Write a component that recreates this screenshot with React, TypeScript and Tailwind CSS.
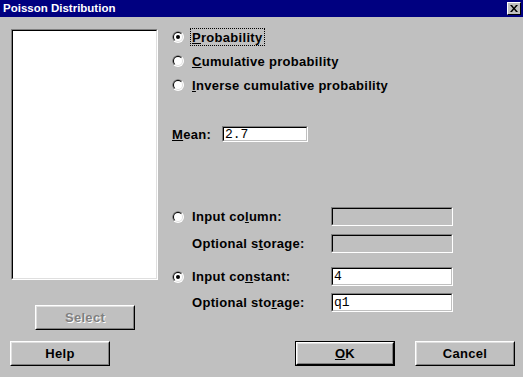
import { useId } from 'react';

const font = "font-['Liberation_Sans',Arial,sans-serif]";

// Win95-style radio button, drawn as two bevelled rings
const Radio: React.FC<{ checked?: boolean }> = ({ checked }) => {
  const id = useId();
  return (
    <svg width="12" height="12" viewBox="0 0 12 12" className="shrink-0">
      <defs>
        <clipPath id={id}>
          <polygon points="0,0 12,0 0,12" />
        </clipPath>
      </defs>
      <circle cx="6" cy="6" r="6" fill="#ffffff" />
      <circle cx="6" cy="6" r="6" fill="#808080" clipPath={`url(#${id})`} />
      <circle cx="6" cy="6" r="5" fill="#dfdfdf" />
      <circle cx="6" cy="6" r="5" fill="#000000" clipPath={`url(#${id})`} />
      <circle cx="6" cy="6" r="4" fill="#ffffff" />
      {checked && <circle cx="6" cy="6" r="2" fill="#000000" />}
    </svg>
  );
};

// Sunken edit field
const Field: React.FC<{ value?: string; disabled?: boolean; className?: string }> = ({
  value,
  disabled,
  className = '',
}) => (
  <div
    className={`border border-t-[#808080] border-l-[#808080] border-b-white border-r-white ${className}`}
  >
    <div
      className={`h-full border border-t-black border-l-black border-b-[#c0c0c0] border-r-[#c0c0c0] px-[1px] flex items-center font-['Liberation_Mono','Courier_New',monospace] font-normal tracking-normal text-[13px] leading-none text-black ${
        disabled ? 'bg-[#c0c0c0]' : 'bg-white'
      }`}
    >
      {value}
    </div>
  </div>
);

// Raised push button
const Button: React.FC<{
  children: React.ReactNode;
  isDefault?: boolean;
  disabled?: boolean;
  className?: string;
}> = ({ children, isDefault, disabled, className = '' }) => {
  const inner = (
    <div className="h-full border border-t-white border-l-white border-b-black border-r-black">
      <div className="h-full border border-t-[#dfdfdf] border-l-[#dfdfdf] border-b-[#808080] border-r-[#808080] flex items-center justify-center">
        <span
          className={`text-[13px] font-bold leading-none tracking-[0.3px] ${
            disabled ? 'text-[#808080] [text-shadow:1px_1px_0_#ffffff]' : 'text-black'
          }`}
        >
          {children}
        </span>
      </div>
    </div>
  );
  return (
    <div className={`h-[25px] w-[100px] ${isDefault ? 'border border-black' : ''} ${className}`}>
      {inner}
    </div>
  );
};

export default function App() {
  return (
    <div className={`w-[523px] h-[377px] bg-[#c0c0c0] ${font} text-black select-none overflow-hidden`}>
      {/* Title bar */}
      <div className="h-[17px] bg-[#000080] flex items-center justify-between pl-[3px] pr-[2px]">
        <span className="text-white font-bold text-[11.5px] leading-none">Poisson Distribution</span>
        <div className="w-[14px] h-[13px] bg-[#c0c0c0] border border-t-white border-l-white border-b-black border-r-black flex items-center justify-center">
          <svg width="8" height="7" viewBox="0 0 8 7">
            <path d="M0 0h2l2 2.5L6 0h2L5 3.5 8 7H6L4 4.5 2 7H0l3-3.5z" fill="#000" />
          </svg>
        </div>
      </div>

      {/* Main area */}
      <div className="flex pt-[12px]">
        {/* Left column: variable list + Select */}
        <div className="ml-[11px] w-[147px] flex flex-col">
          <div className="h-[251px] border border-t-[#808080] border-l-[#808080] border-b-white border-r-white">
            <div className="h-full bg-white border border-t-black border-l-black border-b-[#dfdfdf] border-r-[#dfdfdf]" />
          </div>
          <Button disabled className="mt-[25px] ml-[24px]">
            Select
          </Button>
        </div>

        {/* Right column */}
        <div className="ml-[14px] flex flex-col text-[13px] font-bold leading-none tracking-[0.3px]">
          <div className="flex flex-col gap-[6px] -mt-[1px]">
            <div className="flex items-center h-[18px]">
              <Radio checked />
              <span className="ml-[6px] h-[18px] px-[1px] flex items-center border border-dotted border-black">
                <span className="underline">P</span>robability
              </span>
            </div>
            <div className="flex items-center h-[18px]">
              <Radio />
              <span className="ml-[8px]">
                <span className="underline">C</span>umulative probability
              </span>
            </div>
            <div className="flex items-center h-[18px]">
              <Radio />
              <span className="ml-[8px]">
                <span className="underline">I</span>nverse cumulative probability
              </span>
            </div>
          </div>

          <div className="flex items-center mt-[32px]">
            <span className="w-[50px]">
              <span className="underline">M</span>ean:
            </span>
            <Field value="2.7" className="w-[86px] h-[16px]" />
          </div>

          <div className="flex flex-col mt-[65px]">
            <div className="flex items-center">
              <Radio />
              <span className="ml-[8px] w-[139px]">
                Input co<span className="underline">l</span>umn:
              </span>
              <Field disabled className="w-[122px] h-[19px]" />
            </div>
            <div className="flex items-center mt-[8px]">
              <span className="ml-[20px] w-[139px]">
                Optional s<span className="underline">t</span>orage:
              </span>
              <Field disabled className="w-[122px] h-[19px]" />
            </div>
            <div className="flex items-center mt-[14px]">
              <Radio checked />
              <span className="ml-[8px] w-[139px]">
                Input co<span className="underline">n</span>stant:
              </span>
              <Field value="4" className="w-[122px] h-[19px]" />
            </div>
            <div className="flex items-center mt-[7px]">
              <span className="ml-[20px] w-[139px]">
                Optional sto<span className="underline">r</span>age:
              </span>
              <Field value="q1" className="w-[122px] h-[19px]" />
            </div>
          </div>
        </div>
      </div>

      {/* Bottom buttons */}
      <div className="flex mt-[11px] pl-[10px]">
        <Button>Help</Button>
        <Button isDefault className="ml-[185px]">
          <span className="underline">O</span>K
        </Button>
        <Button className="ml-[20px]">Cancel</Button>
      </div>
    </div>
  );
}
